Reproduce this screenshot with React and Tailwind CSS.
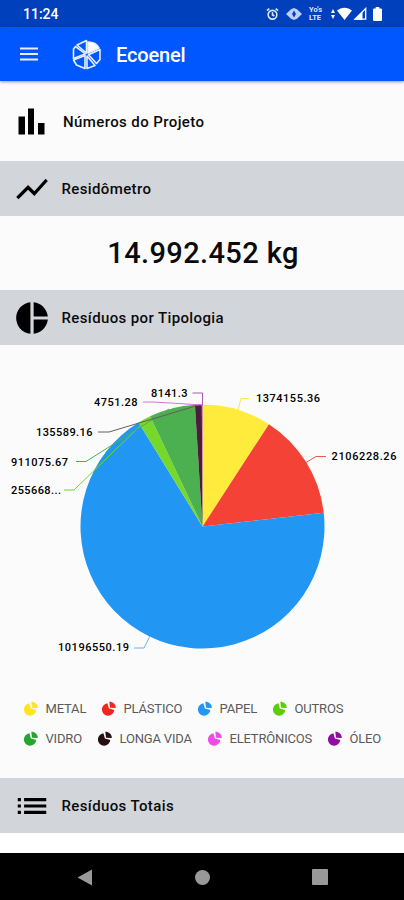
import { MdShowChart, MdPieChart, MdList } from "react-icons/md";

const slices = [
  { name: "METAL", value: 1374155.36, color: "#ffeb3b" },
  { name: "PLÁSTICO", value: 2106228.26, color: "#f44336" },
  { name: "PAPEL", value: 10196550.19, color: "#2196f3" },
  { name: "OUTROS", value: 255668.1, color: "#76d82b" },
  { name: "VIDRO", value: 911075.67, color: "#4caf50" },
  { name: "LONGA VIDA", value: 135589.16, color: "#4a1d3a" },
  { name: "ELETRÔNICOS", value: 4751.28, color: "#ee4ce8" },
  { name: "ÓLEO", value: 8141.3, color: "#8e1a9e" },
];

const labels = [
  { text: "1374155.36", x: 256, y: 57, width: 64, line: "M238 65 L241 53.5 H249", color: "#ffe45c" },
  { text: "2106228.26", x: 331.5, y: 115, width: 65, line: "M306 117.5 L316 111.5 H326", color: "#f4574c" },
  { text: "10196550.19", x: 58, y: 306, width: 71, line: "M150 291 L144 303 H134", color: "#6bb2f0" },
  { text: "255668...", x: 11, y: 148.5, width: 50, line: "M145 76 L74 145 H64", color: "#76d82b" },
  { text: "911075.67", x: 11, y: 120.5, width: 57, line: "M169 64 L86 116.5 H76", color: "#4caf50" },
  { text: "135589.16", x: 36, y: 91, width: 56.5, line: "M199 60 L109 87 H98", color: "#6b5a62" },
  { text: "4751.28", x: 94, y: 61, width: 43.5, line: "M202 60 L154 57 H143", color: "#d873d8" },
  { text: "8141.3", x: 151, y: 51.5, width: 36.5, line: "M202.5 60 V48 H192.5", color: "#a65bb5" },
];

const legend = [
  [
    { name: "METAL", color: "#ffe51f", gap: "w-[78px]" },
    { name: "PLÁSTICO", color: "#f3261f", gap: "w-[96px]" },
    { name: "PAPEL", color: "#2196f3", gap: "w-[75px]" },
    { name: "OUTROS", color: "#5ccc0c", gap: "w-[80px]" },
  ],
  [
    { name: "VIDRO", color: "#25a52f", gap: "w-[74px]" },
    { name: "LONGA VIDA", color: "#260f10", gap: "w-[110px]" },
    { name: "ELETRÔNICOS", color: "#ee4ce8", gap: "w-[120px]" },
    { name: "ÓLEO", color: "#8e0f9e", gap: "w-[60px]" },
  ],
];

const CX = 202.5;
const CY = 181.5;
const R = 122;

function slicePaths() {
  const total = slices.reduce((sum, s) => sum + s.value, 0);
  let angle = 0;
  return slices.map((s) => {
    const start = angle;
    angle += (s.value / total) * Math.PI * 2;
    const large = angle - start > Math.PI ? 1 : 0;
    const x1 = CX + R * Math.sin(start);
    const y1 = CY - R * Math.cos(start);
    const x2 = CX + R * Math.sin(angle);
    const y2 = CY - R * Math.cos(angle);
    return { ...s, d: `M${CX} ${CY} L${x1} ${y1} A${R} ${R} 0 ${large} 1 ${x2} ${y2} Z` };
  });
}

function StatusBar() {
  return (
    <div className="flex h-[27px] items-center justify-between bg-[#0040bd] pl-[23px] pr-[22px] text-white">
      <span className="pt-px text-[14px] font-medium leading-none">11:24</span>
      <div className="flex items-center">
        {/* alarme */}
        <svg width="13" height="14" viewBox="0 0 14 14" fill="none" stroke="#dce7ff" strokeWidth="1.7">
          <circle cx="7" cy="7.8" r="4.7" />
          <path d="M1 3.4 3.6 1.2M13 3.4 10.4 1.2M7 5v3l2 1.2" />
        </svg>
        {/* vibrar */}
        <svg className="ml-[7px]" width="16" height="14" viewBox="0 0 16 14" fill="#b9cffc">
          <path d="M0 7 5 2.2 8 1l3 1.2L16 7l-5 4.8L8 13l-3-1.2z" />
          <path d="M8 3.6 10 7 8 10.4 6 7z" fill="#0040bd" />
        </svg>
        <div className="ml-[7px] flex w-4 flex-col gap-px text-[7.5px] font-bold leading-[7px] text-[#dce7ff]">
          <span>Yo's</span>
          <span>LTE</span>
        </div>
        <svg className="ml-[6px]" width="4" height="12" viewBox="0 0 4 12" fill="#fff">
          <path d="M0 5 2 1l2 4zM0 7h4l-2 4z" />
        </svg>
        <svg className="ml-[2px]" width="15" height="13" viewBox="0 0 15 13" fill="#fff">
          <path d="M7.5 13 0 3.6C4.2-.3 10.8-.3 15 3.6z" />
        </svg>
        <svg className="ml-px" width="14" height="13" viewBox="0 0 14 13">
          <path d="M12.7 1.5V12.2H2z" fill="none" stroke="#fff" strokeWidth="1.3" />
          <path d="M1 12.8 9.5 4.5v8.3z" fill="#fff" />
        </svg>
        <svg className="ml-[6px]" width="9" height="14" viewBox="0 0 9 14" fill="#fff">
          <path d="M2.7 0h3.6v1.5H8q1 0 1 1V13q0 1-1 1H1q-1 0-1-1V2.5q0-1 1-1h1.7z" />
        </svg>
      </div>
    </div>
  );
}

function Logo() {
  return (
    <svg width="30" height="31" viewBox="0 0 30 31" fill="none" stroke="#e8efff" strokeWidth="1.6" strokeLinejoin="round">
      <path d="M14.5 14V1.5L5 6z" />
      <path d="M13.5 14.800 3.500 7.500 1.500 10v9.500z" />
      <path d="M13 16.500 1.500 21 4.500 26l8.500 3.500z" />
      <path d="M15 17v12.500L23 26.500z" />
      <path d="M16.500 15.800 24.500 24.500 28 20.500V10.500z" />
      <path d="M16 14V3C21 3 25 5 27 9z" fill="#fff" />
    </svg>
  );
}

function BarsIcon() {
  return (
    <svg width="27" height="27" viewBox="0 0 27 27" fill="#000">
      <path d="M.5 8.5h6.500v18H.5zM10 .5h6v26h-6zM20 15h6.500v11.500H20z" />
    </svg>
  );
}

function AppBar() {
  return (
    <header className="relative z-10 flex h-[54px] items-center bg-[#0057ff] pl-5 text-white shadow-[0_1px_3px_rgba(0,0,0,0.4)]">
      <svg width="18" height="14" viewBox="0 0 18 14" fill="#e6eeff">
        <path d="M0 .5h18v2H0zM0 6h18v2H0zM0 11.5h18v2H0z" />
      </svg>
      <div className="ml-[34px]">
        <Logo />
      </div>
      <h1 className="ml-[14px] pt-0.5 text-[20px] font-medium leading-none tracking-[-0.15px]">Ecoenel</h1>
    </header>
  );
}

function SectionTitle({ icon: Icon, children }) {
  return (
    <div className="flex h-[55px] shrink-0 items-center bg-[#d2d5da] pl-[13px]">
      <Icon size={38} color="#000" />
      <h2 className="ml-[10.5px] pt-px text-[15px] font-medium leading-none tracking-[0.38px]">{children}</h2>
    </div>
  );
}

function PieChart() {
  return (
    <svg className="block" width="404" height="345" viewBox="0 0 404 345">
      {slicePaths().map((s) => (
        <path key={s.name} d={s.d} fill={s.color} />
      ))}
      {labels.map((l) => (
        <g key={l.text}>
          <path d={l.line} fill="none" stroke={l.color} strokeWidth="1" />
          <text x={l.x} y={l.y} textLength={l.width} fontSize="11" fontWeight="500" fill="#000">
            {l.text}
          </text>
        </g>
      ))}
    </svg>
  );
}

function LegendItem({ item }) {
  return (
    <div className={`flex shrink-0 items-center ${item.gap}`}>
      <svg width="14" height="15" viewBox="0 0 14 15" fill={item.color}>
        <path d="M5.4 2.3 6.9 7.6 12.3 9A6.2 6.2 0 1 1 5.4 2.3z" />
        <path d="M7.3.8C11 .8 13.8 3.3 13.8 7L8 6.8z" />
      </svg>
      <span className="ml-[7.5px] whitespace-nowrap text-[13px] leading-none tracking-[-0.18px] text-[#5a5a5a]">{item.name}</span>
    </div>
  );
}

function NavigationBar() {
  return (
    <nav className="flex h-[47px] shrink-0 items-center justify-between bg-black pl-[77px] pr-[76px] pt-px">
      <svg width="15" height="17" viewBox="0 0 15 17" fill="#999">
        <path d="M15 .5v16L.5 8.5z" />
      </svg>
      <div className="h-[15px] w-[15px] rounded-full bg-[#999]" />
      <div className="h-[16px] w-[16px] rounded-[1px] bg-[#999]" />
    </nav>
  );
}

function App() {
  return (
    <div className="flex h-[900px] w-[404px] flex-col overflow-hidden bg-[#fbfbfb] font-[Roboto,sans-serif] text-[#0b0b0d]">
      <StatusBar />
      <AppBar />
      <div className="flex h-20 shrink-0 items-center pl-[18px]">
        <BarsIcon />
        <h2 className="ml-[18px] pt-0.5 text-[15px] font-medium leading-none tracking-[0.4px]">Números do Projeto</h2>
      </div>
      <SectionTitle icon={MdShowChart}>Residômetro</SectionTitle>
      <div className="flex h-[74px] shrink-0 items-center justify-center pl-0.5">
        <p className="text-[29px] font-medium leading-none tracking-[0.38px]">14.992.452 kg</p>
      </div>
      <SectionTitle icon={MdPieChart}>Resíduos por Tipologia</SectionTitle>
      <PieChart />
      <div className="flex h-[88px] shrink-0 flex-col gap-[15px] pl-6 pt-[11px]">
        {legend.map((row, i) => (
          <div key={i} className="flex">
            {row.map((item) => (
              <LegendItem key={item.name} item={item} />
            ))}
          </div>
        ))}
      </div>
      <SectionTitle icon={MdList}>Resíduos Totais</SectionTitle>
      <div className="h-5 shrink-0 bg-white" />
      <NavigationBar />
    </div>
  );
}

export default App;
